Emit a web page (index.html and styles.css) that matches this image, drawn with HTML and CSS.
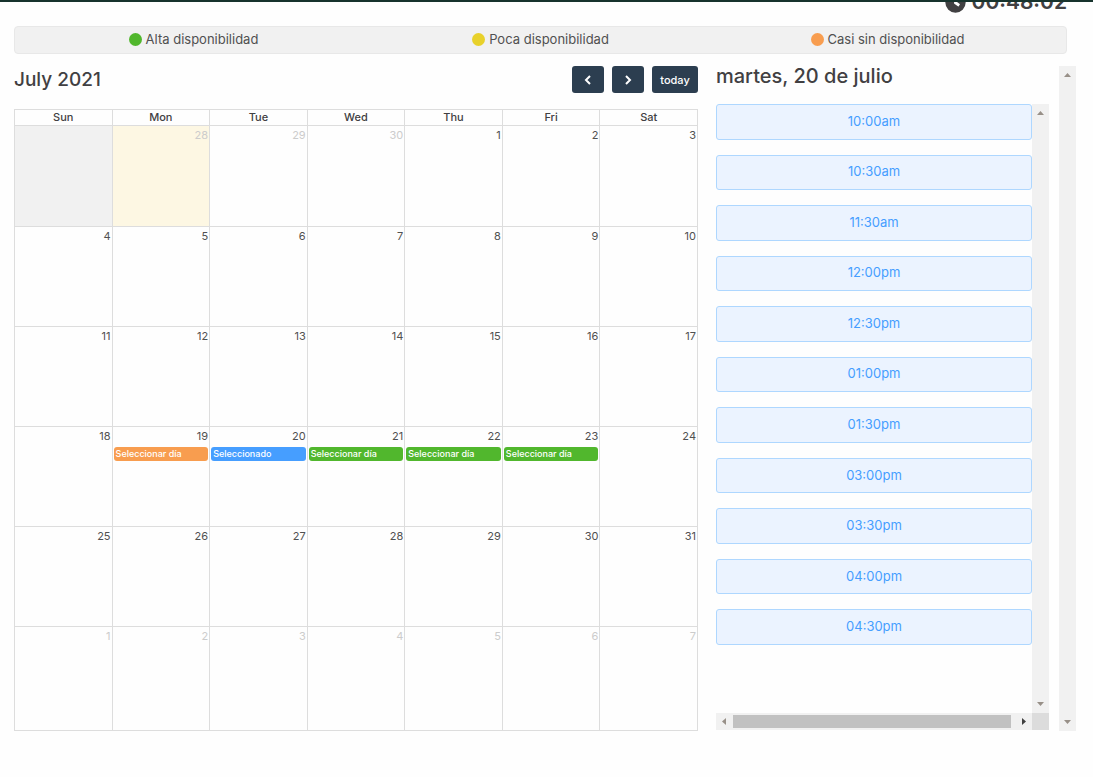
FILE: index.html
```
<!DOCTYPE html>
<html lang="es">
<head>
<meta charset="utf-8">
<title>Calendario de citas</title>
<link rel="stylesheet" href="styles.css">
</head>
<body>
<div class="topbar"></div>
<main class="page">
  <div class="timer">
    <svg class="timer-icon" viewBox="0 0 512 512" aria-hidden="true"><path fill-rule="evenodd" d="M256 8a248 248 0 1 0 0 496a248 248 0 1 0 0-496zM314 350l-88-64c-3-2-5-6-5-10V116c0-7 5-12 12-12h48c7 0 12 5 12 12v126l66 48c6 4 7 12 3 17l-28 39c-4 5-12 7-20 4z"/></svg>
    <span>00:48:02</span>
  </div>
  <ul class="legend">
    <li><i class="dot dot-high"></i>Alta disponibilidad</li>
    <li><i class="dot dot-low"></i>Poca disponibilidad</li>
    <li><i class="dot dot-last"></i>Casi sin disponibilidad</li>
  </ul>
  <div class="columns">
    <section class="calendar">
      <div class="toolbar">
        <h2>July 2021</h2>
        <div class="toolbar-buttons">
          <button class="nav" type="button" aria-label="prev"><svg viewBox="0 0 16 16" aria-hidden="true"><path d="M10 4L6 8l4 4"/></svg></button>
          <button class="nav" type="button" aria-label="next"><svg viewBox="0 0 16 16" aria-hidden="true"><path d="M6 4l4 4-4 4"/></svg></button>
          <button class="today" type="button">today</button>
        </div>
      </div>
      <table class="month">
        <thead><tr><th>Sun</th><th>Mon</th><th>Tue</th><th>Wed</th><th>Thu</th><th>Fri</th><th>Sat</th></tr></thead>
        <tbody>
          <tr class="first"><td class="blocked"></td><td class="current other">28</td><td class="other">29</td><td class="other">30</td><td>1</td><td>2</td><td>3</td></tr>
          <tr><td>4</td><td>5</td><td>6</td><td>7</td><td>8</td><td>9</td><td>10</td></tr>
          <tr><td>11</td><td>12</td><td>13</td><td>14</td><td>15</td><td>16</td><td>17</td></tr>
          <tr><td>18</td><td>19<button class="event last" type="button">Seleccionar día</button></td><td>20<button class="event selected" type="button">Seleccionado</button></td><td>21<button class="event high" type="button">Seleccionar día</button></td><td>22<button class="event high" type="button">Seleccionar día</button></td><td>23<button class="event high" type="button">Seleccionar día</button></td><td>24</td></tr>
          <tr><td>25</td><td>26</td><td>27</td><td>28</td><td>29</td><td>30</td><td>31</td></tr>
          <tr class="final"><td class="other">1</td><td class="other">2</td><td class="other">3</td><td class="other">4</td><td class="other">5</td><td class="other">6</td><td class="other">7</td></tr>
        </tbody>
      </table>
    </section>
    <section class="day">
      <div class="day-content">
        <h2>martes, 20 de julio</h2>
        <div class="slots-frame">
          <div class="slots">
            <button type="button">10:00am</button>
            <button type="button">10:30am</button>
            <button type="button">11:30am</button>
            <button type="button">12:00pm</button>
            <button type="button">12:30pm</button>
            <button type="button">01:00pm</button>
            <button type="button">01:30pm</button>
            <button type="button">03:00pm</button>
            <button type="button">03:30pm</button>
            <button type="button">04:00pm</button>
            <button type="button">04:30pm</button>
          </div>
          <div class="bar vertical">
            <svg viewBox="0 0 17 17"><path d="M5 11l3.500-4 3.500 4z"/></svg>
            <svg viewBox="0 0 17 17"><path d="M5 6l3.500 4 3.500-4z"/></svg>
          </div>
          <div class="bar horizontal">
            <svg viewBox="0 0 17 17"><path d="M10 5L6 8.500l4 3.500z"/></svg>
            <span class="thumb"></span>
            <svg class="enabled" viewBox="0 0 17 17"><path d="M7 5l4 3.500-4 3.500z"/></svg>
          </div>
          <div class="corner"></div>
        </div>
      </div>
      <div class="bar vertical">
        <svg viewBox="0 0 17 17"><path d="M5 11l3.500-4 3.500 4z"/></svg>
        <svg viewBox="0 0 17 17"><path d="M5 6l3.500 4 3.500-4z"/></svg>
      </div>
    </section>
  </div>
</main>
</body>
</html>
```
FILE: styles.css
```
* { box-sizing: border-box; }
body {
  margin: 0;
  background: #fefefe;
  color: #414042;
  font-family: Inter, "Liberation Sans", sans-serif;
  overflow: hidden;
}
button { font-family: inherit; cursor: pointer; }
h2 { margin: 0; font-size: 19px; font-weight: 500; line-height: 24px; }
.topbar { position: fixed; top: 0; left: 0; right: 0; height: 2px; background: #17332d; }
.page { padding: 0 17px 46px 14px; }
.timer {
  display: flex;
  justify-content: flex-end;
  align-items: center;
  gap: 6px;
  height: 24px;
  margin: -10px 9px 12px 0;
  font-size: 21px;
  font-weight: 600;
  line-height: 24px;
}
.timer-icon { width: 21px; height: 21px; fill: #414042; }
.legend {
  display: grid;
  grid-template-columns: repeat(3, 1fr);
  height: 28px;
  margin: 0 9px 12px 0;
  padding: 0 5px 2px;
  list-style: none;
  background: #f1f1f1;
  border: 1px solid #e8e8e8;
  border-radius: 4px;
  color: #505050;
  font-size: 13px;
}
.legend li { display: flex; align-items: center; justify-content: center; gap: 4px; }
.dot { width: 13px; height: 13px; border-radius: 50%; }
.dot-high { background: #51b72d; }
.dot-low { background: #e8d12b; }
.dot-last { background: #f89d4f; }
.columns { display: grid; grid-template-columns: 684fr 360fr; gap: 18px; }
.toolbar { display: flex; justify-content: space-between; align-items: center; height: 27px; margin-bottom: 16px; }
.toolbar-buttons { display: flex; gap: 8px; }
.toolbar-buttons button {
  display: flex;
  align-items: center;
  justify-content: center;
  height: 27px;
  padding: 0;
  border: 0;
  border-radius: 3px;
  background: #2c3e50;
  color: #fff;
  font-size: 11px;
  font-weight: 500;
}
.toolbar-buttons .nav { width: 32px; }
.toolbar-buttons .today { width: 46px; }
.nav svg { width: 16px; height: 16px; fill: none; stroke: #fff; stroke-width: 2; }
.month { width: 100%; table-layout: fixed; border-collapse: collapse; background: #fefefe; }
.month th, .month td { border: 1px solid #ddd; }
.month th { height: 16px; padding: 0; font-size: 11px; font-weight: 500; line-height: 15px; }
.month td {
  height: 100px;
  padding: 2px 1px 0;
  vertical-align: top;
  text-align: right;
  color: #505050;
  font-size: 11px;
  line-height: 15px;
}
.month .first td { height: 101px; }
.month .final td { height: 104px; }
.month .blocked { background: #f1f1f1; }
.month .current { background: #fdf7e3; }
.month .other { color: #ccc; }
.event {
  display: block;
  width: 100%;
  height: 14px;
  margin-top: 3px;
  padding: 0 2px;
  border: 0;
  border-radius: 3px;
  color: #fff;
  font-size: 9px;
  font-weight: 500;
  line-height: 14px;
  text-align: left;
  white-space: nowrap;
}
.event.last { background: #f89d4f; }
.event.selected { background: #469eff; }
.event.high { background: #51b72d; }
.day { display: flex; gap: 10px; }
.day-content { flex: 1; display: flex; flex-direction: column; }
.day-content h2 { height: 38px; font-size: 20px; line-height: 20px; }
.slots-frame { flex: 1; display: grid; grid-template-columns: 1fr 17px; grid-template-rows: 1fr 17px; margin-bottom: 1px; }
.slots { display: grid; grid-auto-rows: 1fr; gap: 15px; padding-bottom: 68px; }
.slots button {
  padding: 0 0 2px;
  border: 1px solid #aed7ff;
  border-radius: 3px;
  background: #ebf3ff;
  color: #469eff;
  font-size: 13px;
}
.bar { display: flex; justify-content: space-between; background: #f1f1f1; }
.bar svg { width: 17px; height: 17px; fill: #989088; }
.bar .enabled { fill: #404040; }
.vertical { flex-direction: column; width: 17px; }
.thumb { flex: 1; margin: 2px 4px 2px 0; background: #c1c1c1; }
.corner { background: #dcdcdc; }
```
